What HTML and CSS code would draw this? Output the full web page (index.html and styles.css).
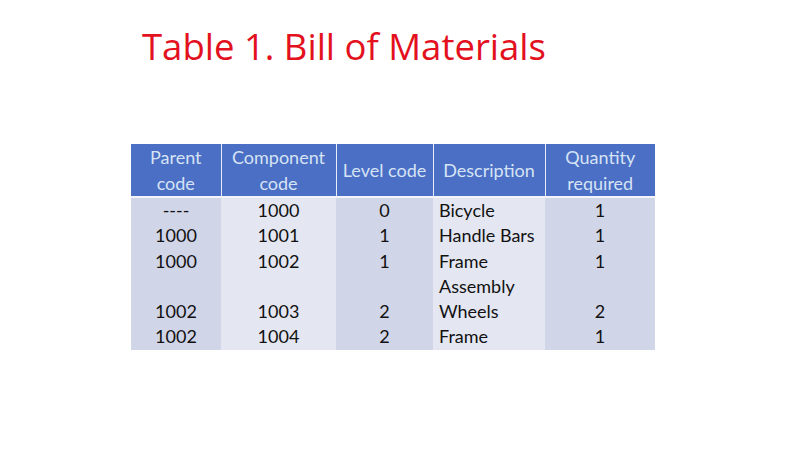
FILE: index.html
```html
<!DOCTYPE html>
<html>
<head>
<meta charset="utf-8">
<link rel="stylesheet" href="styles.css">
</head>
<body>
<div class="slide">
  <h1 class="title">Table 1. Bill of Materials</h1>
  <table class="bom">
    <thead>
      <tr>
        <th class="c1">Parent code</th>
        <th class="c2">Component code</th>
        <th class="c3">Level code</th>
        <th class="c4">Description</th>
        <th class="c5">Quantity required</th>
      </tr>
    </thead>
    <tbody>
      <tr><td>----</td><td>1000</td><td>0</td><td class="desc">Bicycle</td><td>1</td></tr>
      <tr><td>1000</td><td>1001</td><td>1</td><td class="desc">Handle Bars</td><td>1</td></tr>
      <tr><td>1000</td><td>1002</td><td>1</td><td class="desc">Frame Assembly</td><td>1</td></tr>
      <tr><td>1002</td><td>1003</td><td>2</td><td class="desc">Wheels</td><td>2</td></tr>
      <tr><td>1002</td><td>1004</td><td>2</td><td class="desc">Frame</td><td>1</td></tr>
    </tbody>
  </table>
</div>
</body>
</html>
```
FILE: styles.css
```css
html, body {
  margin: 0;
  padding: 0;
  background: #ffffff;
}
.slide {
  width: 800px;
  height: 449px;
  padding: 20px 0 0 131px;
  box-sizing: border-box;
}
.title {
  margin: 0 0 0 11px;
  font-family: "Open Sans", "Noto Sans", sans-serif;
  font-weight: 400;
  font-size: 36.5px;
  line-height: 52px;
  color: #e3101e;
}
.bom {
  margin-top: 72px;
  border-collapse: collapse;
  font-family: Lato, "Liberation Sans", sans-serif;
  font-size: 18px;
  color: #111111;
}
.bom th {
  background: #4a6fc4;
  color: #d6e3f5;
  font-weight: 400;
  line-height: 26px;
  height: 52px;
  padding: 0 3px;
  border-left: 1px solid #e8ecf6;
  border-bottom: 2px solid #f2f4f9;
  text-align: center;
  vertical-align: middle;
  box-sizing: border-box;
}
.bom th:first-child { border-left: none; }
.bom .c1 { width: 90px; }
.bom .c2 { width: 115px; }
.bom .c3 { width: 97px; }
.bom .c4 { width: 112px; }
.bom .c5 { width: 110px; }
.bom td {
  line-height: 25.3px;
  padding: 0 6px;
  text-align: center;
  vertical-align: top;
  background: #e4e7f1;
}
.bom td:nth-child(odd) {
  background: #d1d5e8;
}
.bom td.desc {
  text-align: left;
}
```
